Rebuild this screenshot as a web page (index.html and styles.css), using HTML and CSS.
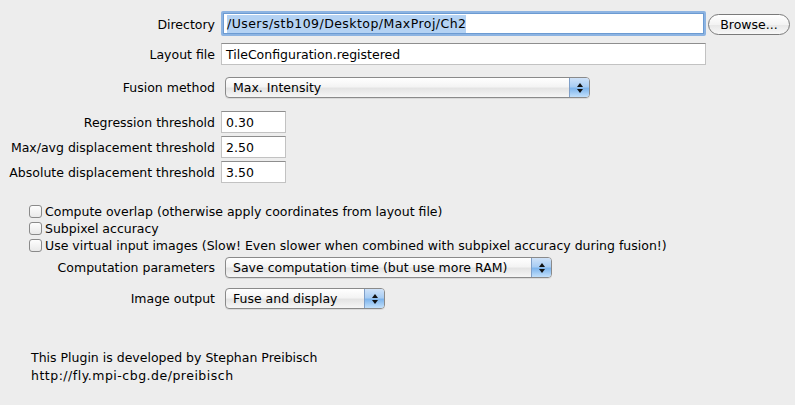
FILE: index.html
```html
<!DOCTYPE html>
<html>
<head>
<meta charset="utf-8">
<link rel="stylesheet" href="styles.css">
</head>
<body>
<div class="panel">
  <div class="row r-dir">
    <div class="lbl">Directory</div>
    <div class="ctl">
      <div class="field focus"><span class="hl">/Users/stb109/Desktop/MaxProj/Ch2</span></div>
      <div class="btn">Browse...</div>
    </div>
  </div>
  <div class="row r-layout">
    <div class="lbl">Layout file</div>
    <div class="ctl"><div class="field wide">TileConfiguration.registered</div></div>
  </div>
  <div class="row r-fusion">
    <div class="lbl">Fusion method</div>
    <div class="ctl"><div class="popup w-fusion"><span class="ptext">Max. Intensity</span><span class="arrows"><i class="up"></i><i class="dn"></i></span></div></div>
  </div>
  <div class="row r-num first">
    <div class="lbl">Regression threshold</div>
    <div class="ctl"><div class="field num">0.30</div></div>
  </div>
  <div class="row r-num">
    <div class="lbl">Max/avg displacement threshold</div>
    <div class="ctl"><div class="field num">2.50</div></div>
  </div>
  <div class="row r-num">
    <div class="lbl">Absolute displacement threshold</div>
    <div class="ctl"><div class="field num">3.50</div></div>
  </div>
  <div class="checks">
    <div class="check"><span class="box"></span><span>Compute overlap (otherwise apply coordinates from layout file)</span></div>
    <div class="check"><span class="box"></span><span>Subpixel accuracy</span></div>
    <div class="check"><span class="box"></span><span>Use virtual input images (Slow! Even slower when combined with subpixel accuracy during fusion!)</span></div>
  </div>
  <div class="row r-comp">
    <div class="lbl">Computation parameters</div>
    <div class="ctl"><div class="popup w-comp"><span class="ptext">Save computation time (but use more RAM)</span><span class="arrows"><i class="up"></i><i class="dn"></i></span></div></div>
  </div>
  <div class="row r-out">
    <div class="lbl">Image output</div>
    <div class="ctl"><div class="popup w-out"><span class="ptext">Fuse and display</span><span class="arrows"><i class="up"></i><i class="dn"></i></span></div></div>
  </div>
  <div class="footer">
    <div>This Plugin is developed by Stephan Preibisch</div>
    <div class="url">http://fly.mpi-cbg.de/preibisch</div>
  </div>
</div>
</body>
</html>
```
FILE: styles.css
```css
html, body {
  margin: 0;
  padding: 0;
  background: #ededed;
}
body {
  font-family: "DejaVu Sans", "Liberation Sans", sans-serif;
  font-size: 12.5px;
  color: #000;
  width: 795px;
  height: 405px;
  overflow: hidden;
}
.panel {
  padding-top: 11px;
  display: flex;
  flex-direction: column;
}
.row {
  display: grid;
  grid-template-columns: 215px auto;
  column-gap: 6px;
  align-items: center;
}
.lbl {
  text-align: right;
  white-space: nowrap;
}
.r-dir .lbl { padding-top: 2px; }
.ctl {
  display: flex;
  align-items: center;
}
.r-dir { height: 25px; }
.r-layout { height: 22px; margin-top: 7px; }
.r-fusion { height: 21px; margin-top: 12px; }
.r-num { height: 22px; margin-top: 3px; }
.r-num.first { margin-top: 13px; }
.r-comp { height: 21px; margin-top: 3px; }
.r-out { height: 21px; margin-top: 10px; }

.field {
  box-sizing: border-box;
  height: 22px;
  background: #fff;
  border: 1px solid #c2c2c2;
  border-top-color: #8e8e8e;
  padding: 0 4px;
  display: flex;
  align-items: center;
  white-space: nowrap;
}
.field.focus {
  width: 485px;
  height: 25px;
  border: 2px solid #8db4e2;
  box-shadow: inset 0 0 0 1px #6c9bd2;
  border-radius: 2px;
  padding: 0 4px;
}
.hl {
  background: #b4d2f3;
  line-height: 18px;
  letter-spacing: 0.45px;
}
.field.wide { width: 485px; }
.field.num { width: 65px; }

.btn {
  box-sizing: border-box;
  margin-left: 2px;
  width: 82px;
  height: 21px;
  border: 1px solid #7a7a7a;
  border-radius: 11px;
  background: linear-gradient(#ffffff, #f3f3f3 50%, #e6e6e6 51%, #f8f8f8);
  display: flex;
  align-items: center;
  justify-content: center;
  margin-top: 1px;
}

.popup {
  box-sizing: border-box;
  margin-left: 4px;
  height: 21px;
  border: 1px solid #8a8a8a;
  border-radius: 4px;
  background: linear-gradient(#ffffff, #f4f4f4 45%, #e4e4e4 55%, #f6f6f6);
  display: flex;
  align-items: center;
  justify-content: space-between;
  box-shadow: 0 1px 0 rgba(0,0,0,0.08);
  overflow: hidden;
}
.w-fusion { width: 365px; }
.w-comp { width: 327px; }
.w-out { width: 160px; }
.ptext {
  padding-left: 7px;
  white-space: nowrap;
}
.arrows {
  width: 19px;
  height: 100%;
  border-left: 1px solid #7f9fc8;
  background: linear-gradient(#cfe2f8, #a9cdf3 45%, #7fb5ec 55%, #c2e0fb);
  display: flex;
  flex-direction: column;
  align-items: center;
  justify-content: center;
  gap: 2px;
}
.arrows i {
  display: block;
  width: 0;
  height: 0;
  border-left: 3px solid transparent;
  border-right: 3px solid transparent;
}
.arrows .up { border-bottom: 4px solid #111; }
.arrows .dn { border-top: 4px solid #111; }

.checks {
  margin-top: 20px;
  padding-left: 29px;
  display: flex;
  flex-direction: column;
}
.check {
  height: 17px;
  display: flex;
  align-items: center;
  white-space: nowrap;
}
.box {
  box-sizing: border-box;
  width: 13px;
  height: 13px;
  border: 1px solid #8a8a8a;
  border-radius: 3px;
  background: linear-gradient(#fdfdfd, #e9e9e9);
  margin-right: 3px;
  flex: none;
}

.footer {
  margin-top: 40px;
  padding-left: 31px;
  line-height: 18px;
  font-size: 12.5px;
}
.url {
  letter-spacing: 0.5px;
}
```
